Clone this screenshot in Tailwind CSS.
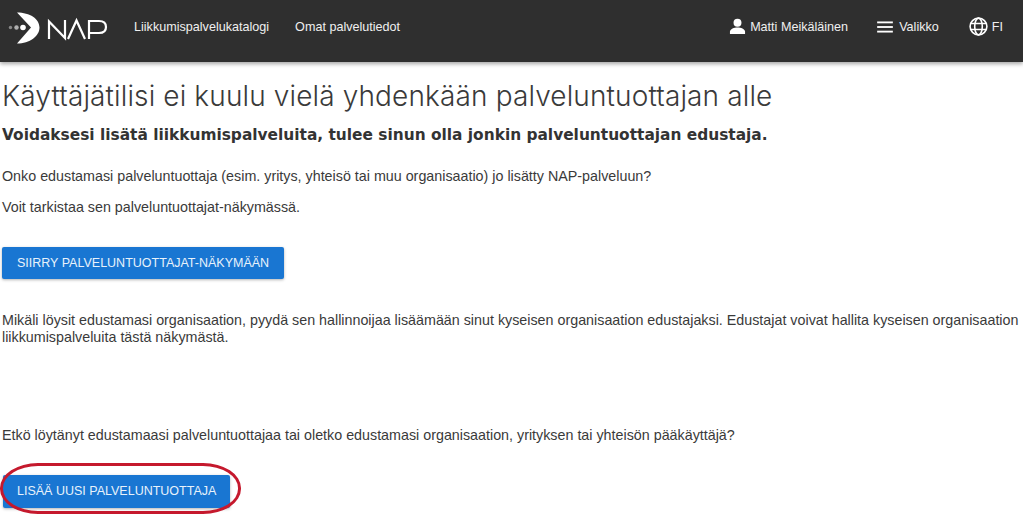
<!DOCTYPE html>
<html lang="fi">
<head>
<meta charset="utf-8">
<script src="https://cdn.jsdelivr.net/npm/@tailwindcss/browser@4"></script>
</head>
<body class="bg-white font-['Liberation_Sans',sans-serif] text-[#3a3a3a] overflow-hidden">
<div class="w-[1023px] h-[522px] overflow-hidden relative">
<header class="h-[62px] bg-[#2f2f2f] flex items-start justify-between shadow-[0_2px_4px_rgba(0,0,0,0.35)] text-[#f0f0f0] text-[12.600px] leading-[16px]">
  <nav class="flex items-center h-[53px]">
    <svg class="ml-[8px] w-[100px] h-[34px]" viewBox="0 0 100 34" fill="none">
      <circle cx="2.500" cy="17.500" r="1.700" fill="#8a8a8a"/>
      <circle cx="8.500" cy="17.500" r="2.200" fill="#b0b0b0"/>
      <circle cx="15" cy="17.500" r="2.800" fill="#fff"/>
      <path d="M9 2.500C22 2.500 31.500 9 31.500 17.500C31.500 26 22 33.500 9 33.500L23 17.500Z" fill="#fff"/>
      <path d="M41 29V11.500L57 28V10" stroke="#fff" stroke-width="2.200"/>
      <path d="M60 29L68.500 10.500L77 29" stroke="#fff" stroke-width="2.200"/>
      <path d="M81 29V11H91C95.500 11 98 13.500 98 17C98 20.500 95.500 23 91 23H81" stroke="#fff" stroke-width="2.200"/>
    </svg>
    <a class="ml-[26px]">Liikkumispalvelukatalogi</a>
    <a class="ml-[26px]">Omat palvelutiedot</a>
  </nav>
  <div class="flex items-center h-[53px] pr-[20px]">
    <svg class="w-[17px] h-[17px]" viewBox="0 0 18 18" fill="#fff"><circle cx="9" cy="5" r="4.200"/><path d="M1 17v-2.500C1 11.500 5.500 10 9 10s8 1.500 8 4.500V17Z"/></svg>
    <span class="ml-[4px]">Matti Meikäläinen</span>
    <svg class="ml-[29px] w-[16px] h-[12px]" viewBox="0 0 17 13" fill="#fff"><rect y="0.500" width="17" height="2"/><rect y="5.500" width="17" height="2"/><rect y="10.500" width="17" height="2"/></svg>
    <span class="ml-[6px]">Valikko</span>
    <svg class="ml-[30px] w-[19px] h-[19px]" viewBox="0 0 19 19" fill="none" stroke="#fff" stroke-width="1.600"><circle cx="9.500" cy="9.500" r="8.400"/><ellipse cx="9.500" cy="9.500" rx="3.800" ry="8.400"/><path d="M1.800 6.500H17.200M1.800 12.500H17.200"/></svg>
    <span class="ml-[4px]">FI</span>
  </div>
</header>
<main class="pl-[2px]">
  <h1 class="mt-[16px] text-[28px] leading-[36px] tracking-[0.13px] font-light font-['Inter',sans-serif] text-[#3a3a3a]">Käyttäjätilisi ei kuulu vielä yhdenkään palveluntuottajan alle</h1>
  <h2 class="mt-[9px] text-[15.400px] leading-[24px] font-bold font-['DejaVu_Sans',sans-serif] text-[#333]">Voidaksesi lisätä liikkumispalveluita, tulee sinun olla jonkin palveluntuottajan edustaja.</h2>
  <p class="mt-[19px] text-[14.300px] leading-[20px]">Onko edustamasi palveluntuottaja (esim. yritys, yhteisö tai muu organisaatio) jo lisätty NAP-palveluun?</p>
  <p class="mt-[11px] text-[14.300px] leading-[20px]">Voit tarkistaa sen palveluntuottajat-näkymässä.</p>
  <a class="mt-[30px] inline-flex items-center whitespace-nowrap h-[32px] px-[15px] bg-[#1976d2] rounded-[2px] text-[#e8f2fb] text-[12.500px] shadow-[0_1px_3px_rgba(0,0,0,0.3)]">SIIRRY PALVELUNTUOTTAJAT-NÄKYMÄÄN</a>
  <p class="mt-[33px] text-[14.300px] leading-[17px]">Mikäli löysit edustamasi organisaation, pyydä sen hallinnoijaa lisäämään sinut kyseisen organisaation edustajaksi. Edustajat voivat hallita kyseisen organisaation liikkumispalveluita tästä näkymästä.</p>
  <p class="mt-[79px] text-[14.300px] leading-[20px]">Etkö löytänyt edustamaasi palveluntuottajaa tai oletko edustamasi organisaation, yrityksen tai yhteisön pääkäyttäjä?</p>
  <div class="relative mt-[30px] ml-[1px] w-[240px]">
    <a class="flex items-center whitespace-nowrap w-[227px] h-[33px] px-[14px] bg-[#1976d2] rounded-[2px] text-[#e8f2fb] text-[12.500px] shadow-[0_1px_3px_rgba(0,0,0,0.3)]">LISÄÄ UUSI PALVELUNTUOTTAJA</a>
    <div class="absolute left-[-3px] top-[-12px] w-[241px] h-[51px] border-[3px] border-[#c5192d] rounded-[38px/25px]"></div>
  </div>
</main>
</div>
</body>
</html>
